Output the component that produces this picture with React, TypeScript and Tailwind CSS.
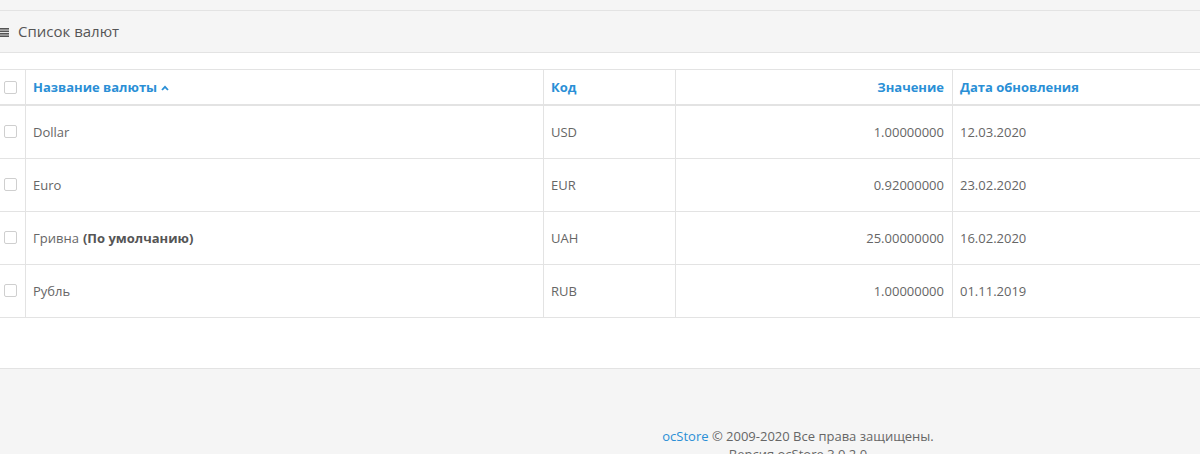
import React from "react"

const rows = [
  { name: "Dollar", code: "USD", value: "1.00000000", date: "12.03.2020" },
  { name: "Euro", code: "EUR", value: "0.92000000", date: "23.02.2020" },
  { name: "Гривна", def: true, code: "UAH", value: "25.00000000", date: "16.02.2020" },
  { name: "Рубль", code: "RUB", value: "1.00000000", date: "01.11.2019" },
]

function Checkbox() {
  return <span className="block w-[13px] h-[13px] border border-[#cfcfcf] rounded-[2px] bg-white" />
}

export default function App() {
  return (
    <div className="w-full h-[454px] overflow-hidden bg-[#f5f5f5] text-[13px] text-[#666] font-['Open_Sans',sans-serif]">
      <div className="h-[10px]" />
      <div className="bg-white border-y border-[#e3e3e3]">
        <div className="h-[42px] bg-[#f5f5f5] border-b border-[#e3e3e3] flex items-center">
          <svg width="9" height="9" viewBox="0 0 9 9" className="mr-[9px] mt-[1px]" fill="#555">
            <rect x="0" y="0" width="9" height="1.6" />
            <rect x="0" y="2.5" width="9" height="1.6" />
            <rect x="0" y="5" width="9" height="1.6" />
            <rect x="0" y="7.4" width="9" height="1.6" />
          </svg>
          <h3 className="text-[15px] text-[#555]">Список валют</h3>
        </div>

        <div className="pt-[16px]">
          <div className="border-t border-[#e3e3e3]">
            <div className="flex h-[36px] border-b-2 border-[#e3e3e3] font-bold text-[#2a8fd6]">
              <div className="w-[25px] flex items-center pl-[4px]">
                <Checkbox />
              </div>
              <div className="w-[518px] border-l border-[#e3e3e3] flex items-center pl-[7px] pt-[2px] gap-[4px]">
                Название валюты
                <svg width="8" height="6" viewBox="0 0 8 6" fill="none" stroke="#2a8fd6" strokeWidth="1.8">
                  <path d="M1 5 L4 1.8 L7 5" />
                </svg>
              </div>
              <div className="w-[132px] border-l border-[#e3e3e3] flex items-center pl-[7px] pt-[2px]">Код</div>
              <div className="w-[277px] border-l border-[#e3e3e3] flex items-center justify-end pr-[8px] pt-[2px]">Значение</div>
              <div className="flex-1 border-l border-[#e3e3e3] flex items-center pl-[7px] pt-[2px]">Дата обновления</div>
            </div>
            {rows.map((r) => (
              <div key={r.code} className="flex h-[53px] border-b border-[#e3e3e3]">
                <div className="w-[25px] flex items-center pl-[4px] pb-[2px]">
                  <Checkbox />
                </div>
                <div className="w-[518px] border-l border-[#e3e3e3] flex items-center pl-[7px] pt-[1px]">
                  {r.name}
                  {r.def && <b className="ml-[4px] text-[#555]">(По умолчанию)</b>}
                </div>
                <div className="w-[132px] border-l border-[#e3e3e3] flex items-center pl-[7px] pt-[1px]">{r.code}</div>
                <div className="w-[277px] border-l border-[#e3e3e3] flex items-center justify-end pr-[8px] pt-[1px]">{r.value}</div>
                <div className="flex-1 border-l border-[#e3e3e3] flex items-center pl-[7px] pt-[1px]">{r.date}</div>
              </div>
            ))}
          </div>
          <div className="h-[50px]" />
        </div>
      </div>

      <footer className="pl-[396px] pt-[58px] text-center leading-[18px]">
        <p>
          <a className="text-[#2a8fd6]">ocStore</a> © 2009-2020 Все права защищены.
        </p>
        <p>Версия ocStore 3.0.2.0</p>
      </footer>
    </div>
  )
}
